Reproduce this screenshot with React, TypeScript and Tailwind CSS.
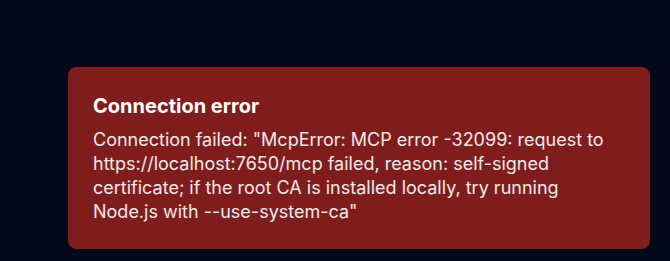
import React from 'react';

const App: React.FC = () => {
  return (
    <div
      className="w-[670px] h-[261px] bg-[#020817] pt-[67px] pl-[68px] pr-[20px]"
      style={{ fontFamily: 'Inter, "Noto Sans", sans-serif' }}
    >
      {/* Error toast */}
      <div className="rounded-lg border border-[#7f1d1d] bg-[#7f1d1d] p-6 text-white">
        <div className="text-xl font-bold leading-7 mb-2">Connection error</div>
        <p className="text-lg leading-6 text-white/90">
          Connection failed: "McpError: MCP error -32099: request to https://localhost:7650/mcp failed, reason: self-signed certificate; if the root CA is installed locally, try running Node.js with --use-system-ca"
        </p>
      </div>
    </div>
  );
};

export default App;
